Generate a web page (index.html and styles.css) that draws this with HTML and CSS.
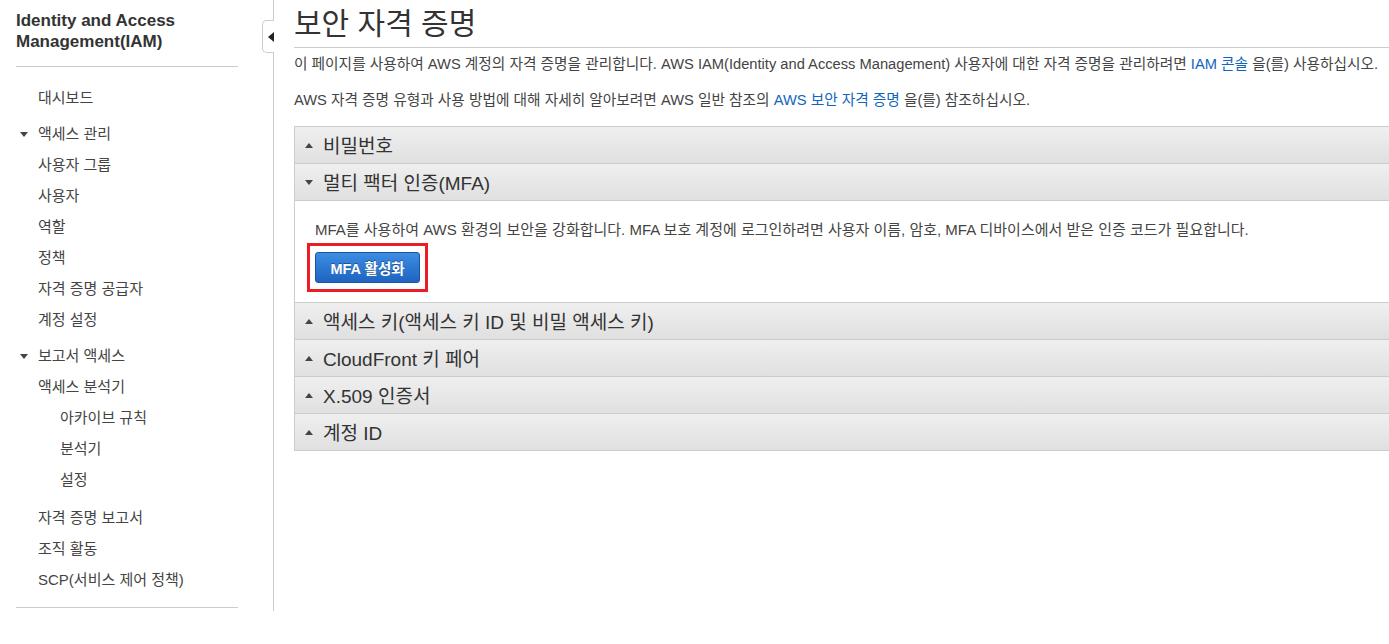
FILE: index.html
```html
<!DOCTYPE html>
<html lang="ko">
<head>
  <meta charset="UTF-8">
  <meta name="viewport" content="width=device-width, initial-scale=1.0">
  <title>보안 자격 증명</title>
  <link rel="stylesheet" href="styles.css">
</head>
<body>
  <div class="page">

    <!-- Sidebar -->
    <aside class="sidebar">
      <div class="collapse-tab"><span class="tab-arrow"></span></div>
      <div class="side-title">Identity and Access Management(IAM)</div>
      <nav class="side-nav">
        <a class="nav-item">대시보드</a>

        <div class="nav-group">
          <div class="nav-head"><span class="caret-down"></span>액세스 관리</div>
          <a class="nav-item">사용자 그룹</a>
          <a class="nav-item">사용자</a>
          <a class="nav-item">역할</a>
          <a class="nav-item">정책</a>
          <a class="nav-item">자격 증명 공급자</a>
          <a class="nav-item">계정 설정</a>
        </div>

        <div class="nav-group">
          <div class="nav-head"><span class="caret-down"></span>보고서 액세스</div>
          <a class="nav-item">액세스 분석기</a>
          <a class="nav-item sub">아카이브 규칙</a>
          <a class="nav-item sub">분석기</a>
          <a class="nav-item sub">설정</a>
        </div>

        <div class="nav-group">
          <a class="nav-item">자격 증명 보고서</a>
          <a class="nav-item">조직 활동</a>
          <a class="nav-item">SCP(서비스 제어 정책)</a>
        </div>
      </nav>
    </aside>

    <!-- Main -->
    <main class="main">
      <h1>보안 자격 증명</h1>
      <p class="intro">이 페이지를 사용하여 AWS 계정의 자격 증명을 관리합니다. AWS IAM(Identity and Access Management) 사용자에 대한 자격 증명을 관리하려면 <a href="#">IAM 콘솔</a> 을(를) 사용하십시오.</p>
      <p class="intro">AWS 자격 증명 유형과 사용 방법에 대해 자세히 알아보려면 AWS 일반 참조의 <a href="#">AWS 보안 자격 증명</a> 을(를) 참조하십시오.</p>

      <div class="panel">
        <div class="section">
          <div class="section-head"><span class="caret-up"></span>비밀번호</div>
        </div>

        <div class="section open">
          <div class="section-head"><span class="caret-down"></span>멀티 팩터 인증(MFA)</div>
          <div class="section-body">
            <p>MFA를 사용하여 AWS 환경의 보안을 강화합니다. MFA 보호 계정에 로그인하려면 사용자 이름, 암호, MFA 디바이스에서 받은 인증 코드가 필요합니다.</p>
            <div class="highlight">
              <button class="btn-primary">MFA 활성화</button>
            </div>
          </div>
        </div>

        <div class="section">
          <div class="section-head"><span class="caret-up"></span>액세스 키(액세스 키 ID 및 비밀 액세스 키)</div>
        </div>
        <div class="section">
          <div class="section-head"><span class="caret-up"></span>CloudFront 키 페어</div>
        </div>
        <div class="section">
          <div class="section-head"><span class="caret-up"></span>X.509 인증서</div>
        </div>
        <div class="section">
          <div class="section-head"><span class="caret-up"></span>계정 ID</div>
        </div>
      </div>
    </main>
  </div>
</body>
</html>
```

FILE: styles.css
```css
body {
  margin: 0;
  padding: 0;
  font-family: "Liberation Sans", "Noto Sans CJK KR", Arial, sans-serif;
  color: #444;
  background: white;
  overflow: hidden;
}

.page {
  display: flex;
  align-items: flex-start;
}

/* Sidebar */
.sidebar {
  position: relative;
  width: 222px;
  flex-shrink: 0;
  padding: 10px 35px 3px 16px;
  border-right: 1px solid #ccc;
}

.collapse-tab {
  position: absolute;
  top: 20px;
  right: -1px;
  width: 11px;
  height: 31px;
  border: 1px solid #ccc;
  border-right: none;
  border-radius: 5px 0 0 5px;
  background: white;
}

.tab-arrow {
  position: absolute;
  top: 11px;
  right: 0;
  width: 0;
  height: 0;
  border-top: 5px solid transparent;
  border-bottom: 5px solid transparent;
  border-right: 6px solid #222;
}

.side-title {
  font-size: 17px;
  font-weight: bold;
  line-height: 21px;
  color: #333;
  padding-bottom: 14px;
  border-bottom: 1px solid #ccc;
}

.side-nav {
  padding: 15px 0 12px;
  border-bottom: 1px solid #ccc;
}

.nav-group {
  margin-top: 6px;
}

.nav-group:last-child {
  margin-top: 7px;
}

.nav-item,
.nav-head {
  display: block;
  height: 31px;
  line-height: 31px;
  font-size: 15px;
  color: #444;
  padding-left: 22px;
  white-space: nowrap;
}

.nav-head {
  position: relative;
  height: 30px;
  line-height: 30px;
}

.nav-head .caret-down {
  position: absolute;
  left: 4px;
  top: 13px;
}

.nav-item.sub {
  padding-left: 44px;
}

.caret-down,
.caret-up {
  display: inline-block;
  width: 0;
  height: 0;
  border-left: 4px solid transparent;
  border-right: 4px solid transparent;
}

.caret-down {
  border-top: 5px solid #444;
}

.caret-up {
  border-bottom: 5px solid #444;
}

/* Main */
.main {
  flex: 1;
  padding-left: 20px;
  min-width: 0;
}

h1 {
  margin: 0;
  font-size: 30px;
  font-weight: normal;
  line-height: 47px;
  color: #333;
  border-bottom: 1px solid #ccc;
}

.intro {
  margin: 6px 0 16px;
  font-size: 14.7px;
  line-height: 20px;
  white-space: nowrap;
}

a {
  color: #1166bb;
  text-decoration: none;
}

.panel {
  width: calc(100% + 20px);
  border: 1px solid #ccc;
  border-bottom: none;
}

.section-head {
  display: flex;
  align-items: center;
  height: 34px;
  padding: 0 0 2px 10px;
  font-size: 19px;
  color: #333;
  background: linear-gradient(#efefef, #e0e0e0);
  border-bottom: 1px solid #ccc;
}

.section-head .caret-up,
.section-head .caret-down {
  margin: 2px 10px 0 0;
}

.section-body {
  padding: 19px 20px 10px;
  border-bottom: 1px solid #ccc;
}

.section-body p {
  margin: 0;
  font-size: 15px;
  line-height: 20px;
}

.highlight {
  display: inline-block;
  margin: 3px 0 0 -8px;
  padding: 6px 5px;
  border: 3px solid #ec1c24;
}

.btn-primary {
  display: block;
  width: 105px;
  height: 31px;
  padding: 0;
  font-family: inherit;
  font-size: 14.5px;
  font-weight: bold;
  color: white;
  text-shadow: 0 -1px 0 rgba(0,0,0,0.35);
  background: linear-gradient(#3c8de3, #1e64c1);
  border: 1px solid #1b55a0;
  border-radius: 3px;
  cursor: pointer;
}
```
